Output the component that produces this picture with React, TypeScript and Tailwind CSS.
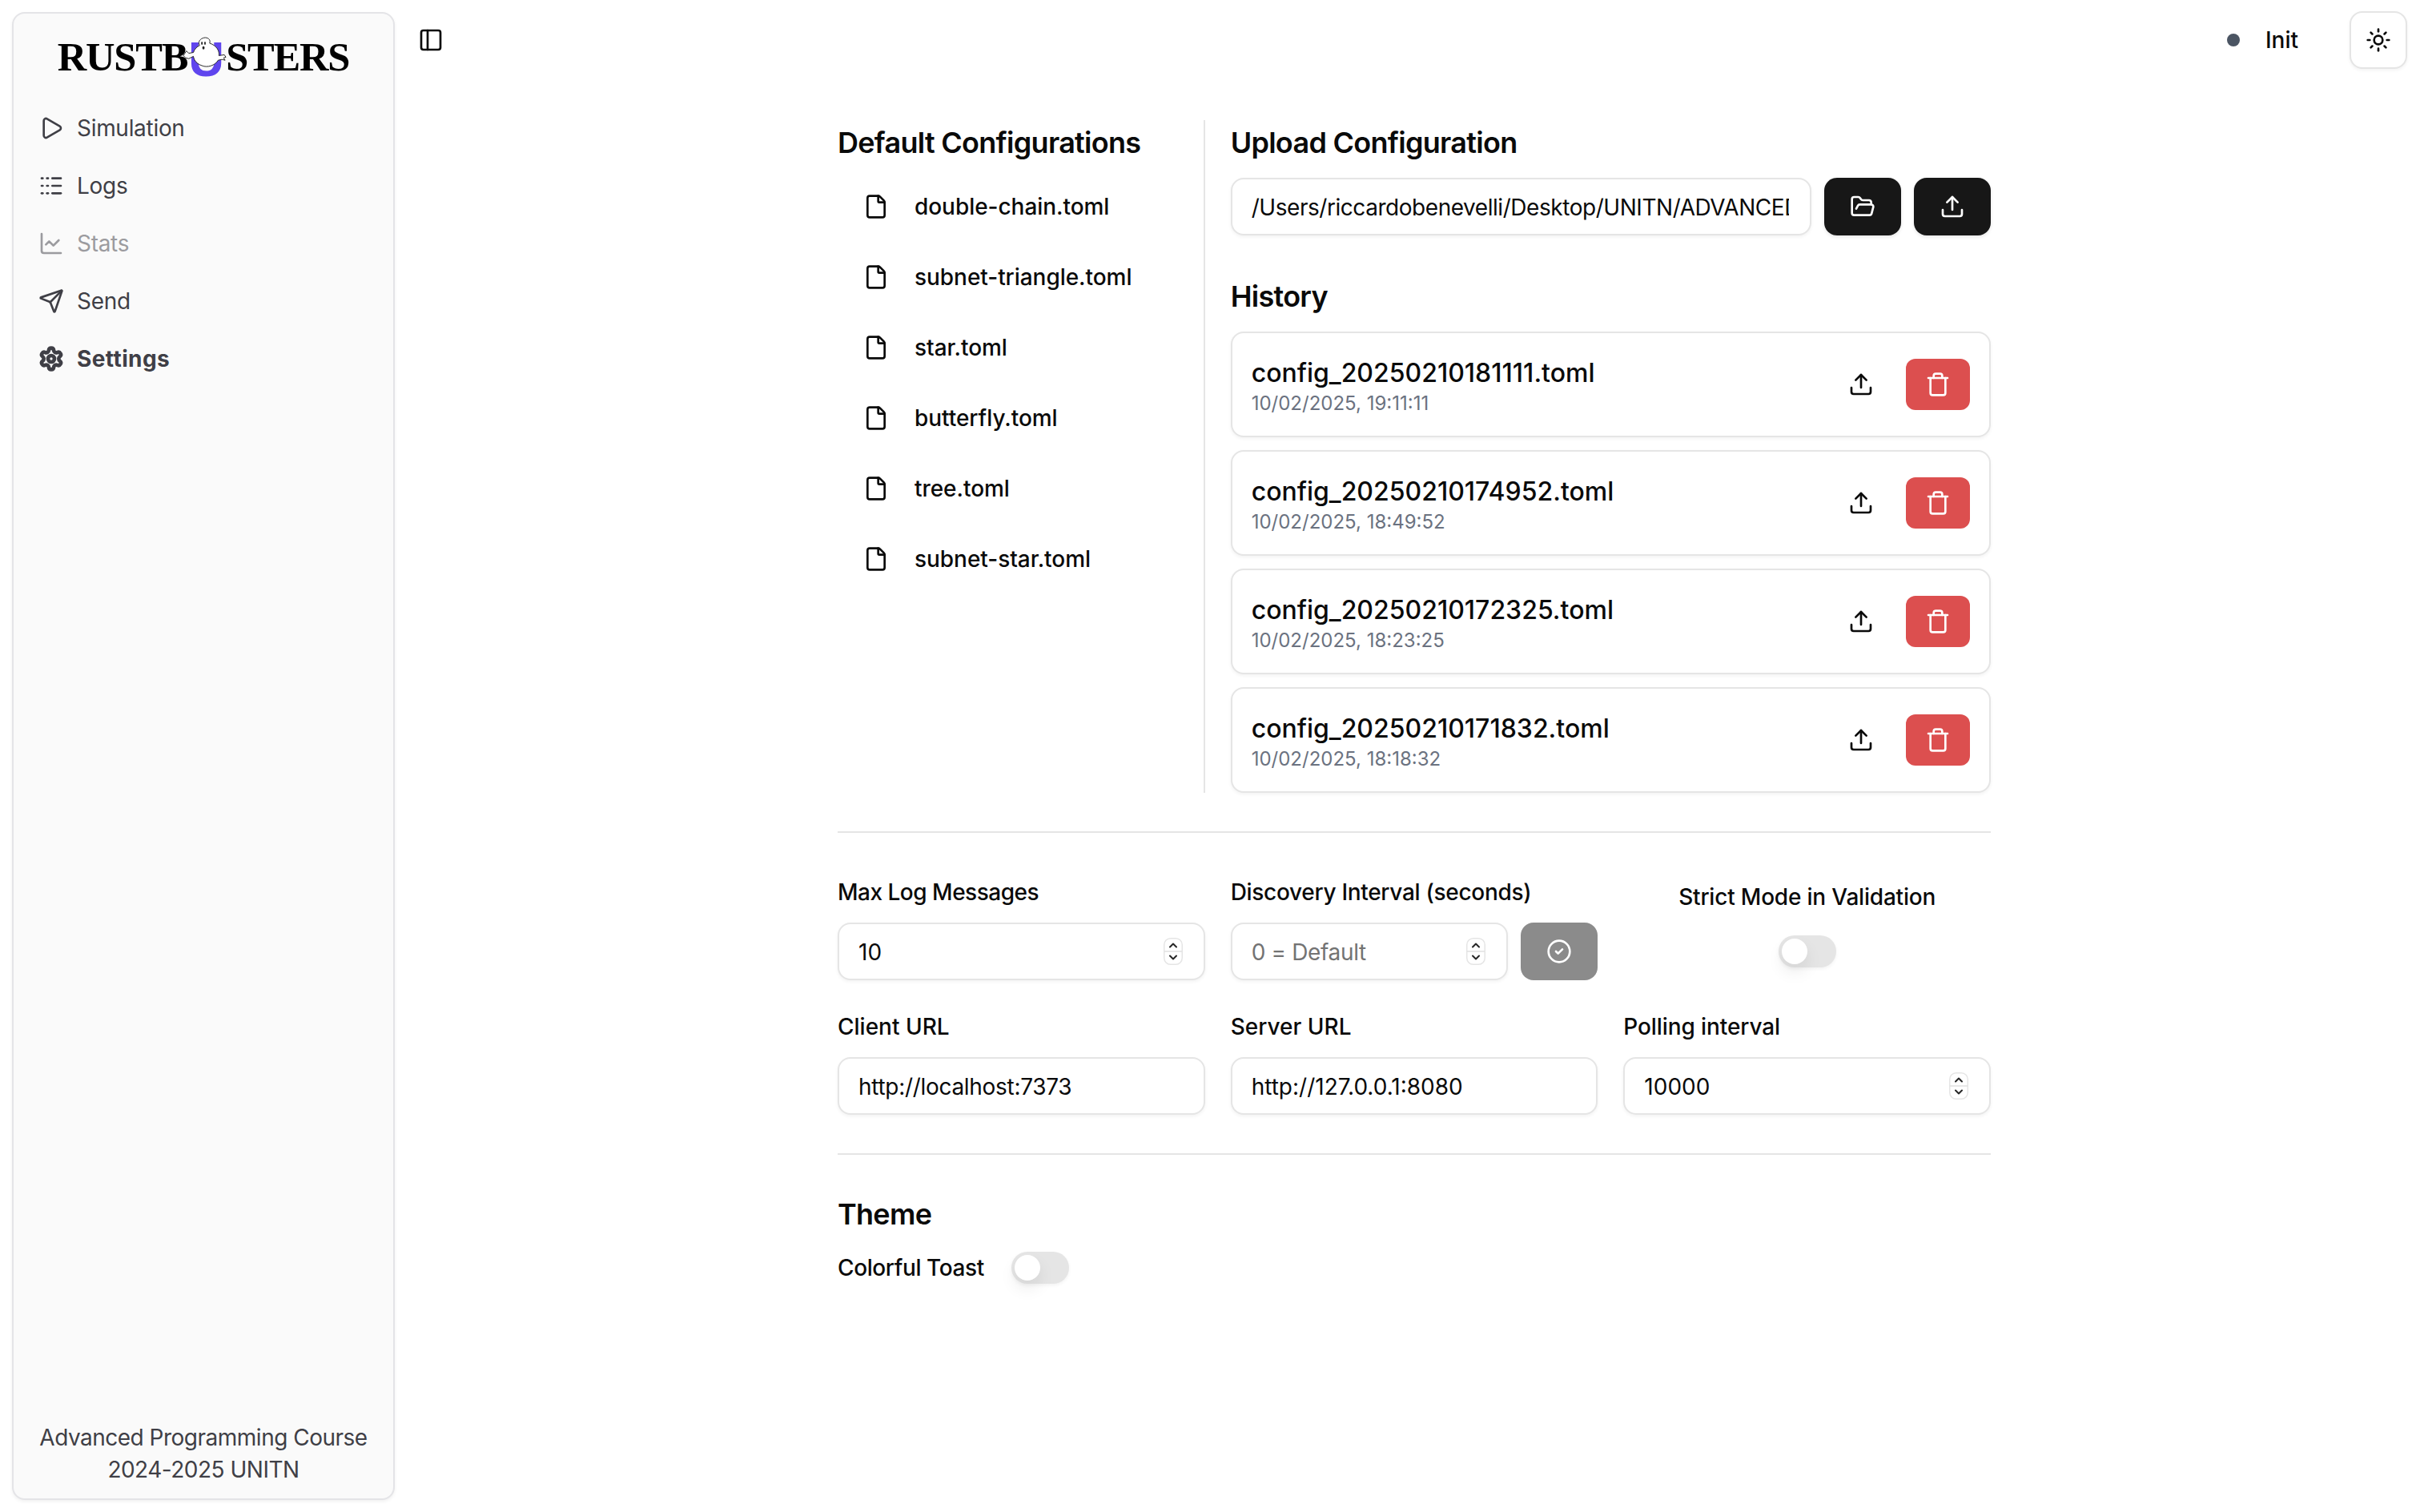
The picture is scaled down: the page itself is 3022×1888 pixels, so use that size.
import React from "react";
import { Play, Logs, ChartLine, Send, Settings, PanelLeft, Sun, File, FolderOpen, Upload, Trash, CircleCheck } from "lucide-react";

const nav = [
  { label: "Simulation", Icon: Play, cls: "text-[#3f3f46] tracking-[-0.3px]" },
  { label: "Logs", Icon: Logs, cls: "text-[#3f3f46] tracking-[-0.3px]" },
  { label: "Stats", Icon: ChartLine, cls: "text-[#3f3f46] opacity-50 tracking-[-0.3px]" },
  { label: "Send", Icon: Send, cls: "text-[#3f3f46] tracking-[-0.3px]" },
  { label: "Settings", Icon: Settings, cls: "text-[#3f3f46] font-bold tracking-[0.4px]" },
];
const defaults = ["double-chain.toml", "subnet-triangle.toml", "star.toml", "butterfly.toml", "tree.toml", "subnet-star.toml"];
const history = [
  ["config_20250210181111.toml", "10/02/2025, 19:11:11"],
  ["config_20250210174952.toml", "10/02/2025, 18:49:52"],
  ["config_20250210172325.toml", "10/02/2025, 18:23:25"],
  ["config_20250210171832.toml", "10/02/2025, 18:18:32"],
];

function Logo() {
  return (
    <div className="flex justify-center items-center h-[68px] text-[50.5px] leading-none font-bold text-black tracking-[-1.2px] [font-family:'Liberation_Serif',serif]">
      <span>RUSTB</span>
      <span className="relative w-[48px] h-[50px]">
        <span className="absolute left-[1px] top-[-3px] text-[#5f45ee] text-[62px] leading-[62px] tracking-normal [font-family:'Liberation_Sans',sans-serif]">U</span>
        <svg className="absolute left-[-6px] top-[0px]" width="56" height="41" viewBox="0 0 58 42">
          <path d="M21 8 C21 3 27 0 31 1 C35 2 36 5 35 8 C44 11 48 18 47 24 L54 23 L56 26 L53 27 L55 30 L51 29 L46 30 C42 37 32 40 25 37 C19 35 15 31 14 25 L8 28 L4 27 L1 24 L3 21 L5 18 L8 21 L14 20 C15 16 19 12 22 11 Z" fill="#fff" stroke="#222" strokeWidth="1" strokeLinejoin="round" />
          <ellipse cx="25" cy="8" rx="1" ry="2" fill="#222" />
          <ellipse cx="29" cy="8" rx="1" ry="2" fill="#222" />
          <ellipse cx="27" cy="14" rx="1.5" ry="2" fill="#222" />
        </svg>
      </span>
      <span>STERS</span>
    </div>
  );
}

function Spinner() {
  return (
    <svg className="shrink-0" width="24" height="34" viewBox="0 0 24 34" fill="none">
      <rect x="0.75" y="0.75" width="22.5" height="32.5" rx="8" fill="#fff" stroke="#e5e5e5" strokeWidth="1.5" />
      <path d="M1 17h22" stroke="#e0e0e0" strokeWidth="1.5" />
      <path d="M8 11.5l4-4 4 4M8 22.5l4 4 4-4" stroke="#262626" strokeWidth="2" strokeLinecap="round" strokeLinejoin="round" />
    </svg>
  );
}

function Field({ value, placeholder, number, cls }: { value?: string; placeholder?: string; number?: boolean; cls?: string }) {
  return (
    <div className="flex-1 min-w-0 h-[72px] flex items-center pl-[24px] pr-[26px] border-2 border-[#e5e5e5] rounded-[16px] bg-white shadow-[0_2px_4px_rgba(0,0,0,0.05)]">
      <input
        readOnly
        value={value ?? ""}
        placeholder={placeholder}
        className={`flex-1 min-w-0 pt-[2px] bg-transparent outline-none text-[28px] text-[#0a0a0a] placeholder:text-[#737373] [font-family:Inter,sans-serif] ${cls ?? ""}`}
      />
      {number && <Spinner />}
    </div>
  );
}

function Toggle() {
  return (
    <div className="w-[72px] h-[40px] rounded-full bg-[#e5e5e5] p-[4px] shadow-[0_2px_4px_rgba(0,0,0,0.05)]">
      <div className="w-[32px] h-[32px] rounded-full bg-white shadow-[0_10px_20px_rgba(0,0,0,0.08)]" />
    </div>
  );
}

function Label({ children, cls }: { children: React.ReactNode; cls?: string }) {
  return <div className={`text-[28px] leading-[28px] font-medium text-[#0a0a0a] mb-[24px] ${cls ?? ""}`}>{children}</div>;
}

function DarkButton({ children }: { children: React.ReactNode }) {
  return (
    <button className="w-[96px] h-[72px] shrink-0 flex items-center justify-center rounded-[16px] bg-[#171717] text-white shadow-[0_2px_4px_rgba(0,0,0,0.1)]">
      {children}
    </button>
  );
}

export default function App() {
  return (
    <div className="flex h-screen bg-white text-[#0a0a0a] [font-family:Inter,sans-serif]">
      <div className="w-[510px] shrink-0 pl-[15px] pr-[17px] py-[15px]">
        <aside className="h-full flex flex-col bg-[#fafafa] border-2 border-[#e4e4e7] rounded-[16px] shadow-[0_2px_4px_rgba(0,0,0,0.06)]">
          <div className="pt-[20px] pb-[15px]">
            <Logo />
          </div>
          <nav className="flex flex-col px-[15px] pt-[4px] pb-[16px]">
            {nav.map(({ label, Icon, cls }) => (
              <div key={label} className={`h-[72px] flex items-center gap-[16px] px-[16px] text-[28px] ${cls}`}>
                <Icon size={32} strokeWidth={label === "Settings" ? 3.5 : 2} />
                <span>{label}</span>
              </div>
            ))}
          </nav>
          <div className="mt-auto pb-[16px] text-center text-[28px] leading-[40px] text-[#3f3f46] tracking-[-0.5px]">
            <p>Advanced Programming Course</p>
            <p>2024-2025 UNITN</p>
          </div>
        </aside>
      </div>

      <main className="flex-1 min-w-0 flex flex-col">
        <header className="h-[100px] shrink-0 flex items-center pl-[12px] pr-[16px]">
          <PanelLeft size={32} strokeWidth={2} className="text-[#0a0a0a]" />
          <div className="ml-auto flex items-center">
            <span className="w-[16px] h-[16px] rounded-full bg-[#4b5563]" />
            <span className="ml-[32px] text-[28px] font-medium">Init</span>
            <button className="ml-[64px] w-[72px] h-[72px] flex items-center justify-center border-2 border-[#e5e5e5] rounded-[16px] bg-white shadow-[0_2px_4px_rgba(0,0,0,0.05)]">
              <Sun size={32} />
            </button>
          </div>
        </header>

        <div className="w-[1440px] mx-auto pt-[50px]">
          <div className="grid grid-cols-3 gap-x-[32px]">
            <section className="border-r-2 border-[#e5e5e5]">
              <h2 className="text-[36px] leading-[56px] font-semibold tracking-[-0.72px] mb-[16px]">Default Configurations</h2>
              <div className="flex flex-col gap-[16px]">
                {defaults.map((name) => (
                  <div key={name} className="h-[72px] flex items-center gap-[32px] px-[32px] text-[28px] font-medium tracking-[-0.05px]">
                    <File size={32} />
                    <span>{name}</span>
                  </div>
                ))}
              </div>
            </section>
            <section className="col-span-2">
              <h2 className="text-[36px] leading-[56px] font-semibold tracking-[-0.72px] mb-[16px]">Upload Configuration</h2>
              <div className="flex gap-[16px]">
                <Field cls="tracking-[-0.45px]" value="/Users/riccardobenevelli/Desktop/UNITN/ADVANCED PROGRAMMING/rustbusters/config.toml" />
                <DarkButton><FolderOpen size={32} /></DarkButton>
                <DarkButton><Upload size={32} /></DarkButton>
              </div>
              <h2 className="text-[36px] leading-[56px] font-semibold tracking-[-0.72px] mt-[48px] mb-[16px]">History</h2>
              <div className="flex flex-col gap-[16px]">
                {history.map(([name, date]) => (
                  <div key={name} className="h-[132px] flex items-center pl-[24px] pr-[24px] border-2 border-[#e5e5e5] rounded-[16px] bg-white shadow-[0_2px_4px_rgba(0,0,0,0.05)]">
                    <div className="flex-1 min-w-0">
                      <div className="text-[32px] leading-[48px] font-medium">{name}</div>
                      <div className="text-[24px] leading-[28px] text-[#6b7280]">{date}</div>
                    </div>
                    <div className="w-[80px] h-[64px] flex items-center justify-center">
                      <Upload size={32} />
                    </div>
                    <div className="ml-[16px] w-[80px] h-[64px] flex items-center justify-center rounded-[12px] bg-[#dc4f4f] text-white">
                      <Trash size={32} />
                    </div>
                  </div>
                ))}
              </div>
            </section>
          </div>

          <div className="h-[2px] bg-[#e5e5e5] mt-[48px]" />

          <div className="grid grid-cols-3 gap-x-[32px] gap-y-[44px] mt-[60px]">
            <div>
              <Label cls="tracking-[-0.5px]">Max Log Messages</Label>
              <div className="flex"><Field value="10" number /></div>
            </div>
            <div>
              <Label cls="tracking-[-0.3px]">Discovery Interval (seconds)</Label>
              <div className="flex gap-[16px]">
                <Field cls="tracking-[-0.35px]" placeholder="0 = Default" number />
                <button className="w-[96px] h-[72px] shrink-0 flex items-center justify-center rounded-[16px] bg-[#8b8b8b] text-white">
                  <CircleCheck size={32} />
                </button>
              </div>
            </div>
            <div className="flex flex-col items-center pt-[6px]">
              <div className="text-[28px] leading-[28px] font-medium tracking-[-0.2px] mb-[34px]">Strict Mode in Validation</div>
              <Toggle />
            </div>
            <div>
              <Label>Client URL</Label>
              <div className="flex"><Field cls="tracking-[-0.3px]" value="http://localhost:7373" /></div>
            </div>
            <div>
              <Label>Server URL</Label>
              <div className="flex"><Field value="http://127.0.0.1:8080" /></div>
            </div>
            <div>
              <Label cls="tracking-[-0.1px]">Polling interval</Label>
              <div className="flex"><Field value="10000" number /></div>
            </div>
          </div>

          <div className="h-[2px] bg-[#e5e5e5] mt-[48px]" />

          <h2 className="text-[36px] leading-[56px] font-semibold tracking-[-0.72px] mt-[46px]">Theme</h2>
          <div className="flex items-center gap-[34px] mt-[18px]">
            <span className="text-[28px] font-medium tracking-[-0.4px]">Colorful Toast</span>
            <Toggle />
          </div>
        </div>
      </main>
    </div>
  );
}
